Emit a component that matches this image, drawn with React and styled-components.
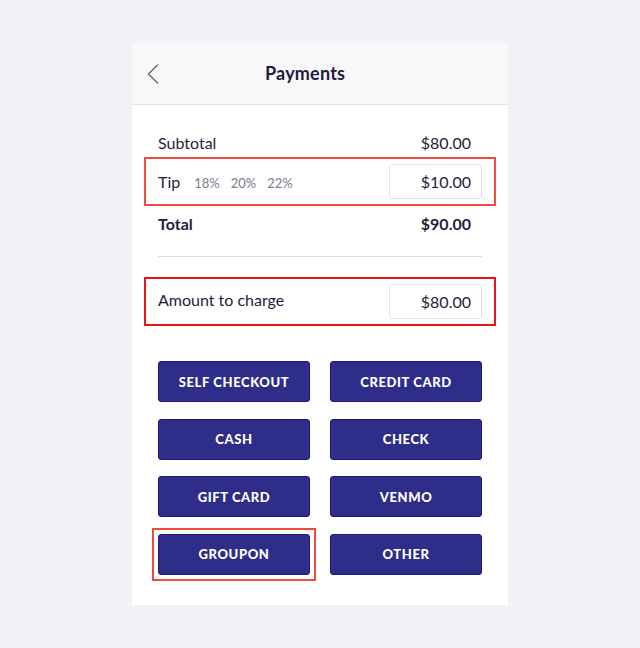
import React from "react";
import styled, { createGlobalStyle } from "styled-components";

const Global = createGlobalStyle`
  html, body { margin: 0; padding: 0; background: #f2f2f6; }
  body { font-family: Lato, "Noto Sans", sans-serif; color: #1e1e3c; }
  * { box-sizing: border-box; }
`;

const Page = styled.div`
  display: flex;
  justify-content: center;
  align-items: flex-start;
  padding-top: 43px;
  min-height: 648px;
`;

const Card = styled.div`
  width: 376px;
  background: #ffffff;
  display: flex;
  flex-direction: column;
`;

const Header = styled.div`
  height: 62px;
  background: #f8f8f8;
  border-bottom: 1px solid #e2e2e6;
  display: flex;
  align-items: center;
  padding-left: 15px;
`;

const BackButton = styled.button`
  border: none;
  background: none;
  padding: 0;
  width: 12px;
  height: 20px;
  display: flex;
  align-items: center;
  cursor: pointer;
`;

const Title = styled.h1`
  margin: 0 0 2px 106px;
  font-size: 18px;
  font-weight: 700;
  letter-spacing: 0.2px;
  color: #1e1e3c;
`;

const Body = styled.div`
  padding: 23px 26px 30px;
  display: flex;
  flex-direction: column;
`;

const Row = styled.div`
  display: flex;
  align-items: center;
  justify-content: space-between;
  height: ${(p) => p.$h || 29}px;
  font-size: 16px;
  font-weight: ${(p) => (p.$bold ? 700 : 400)};
`;

const Value = styled.span`
  padding-right: 11px;
`;

const Highlight = styled.div`
  margin: ${(p) => p.$mt || 0}px -14px 0;
  padding: 5px 12px;
  border: 2px solid ${(p) => p.$color || "#f04a3e"};
`;

const Label = styled.div`
  display: flex;
  align-items: baseline;
  gap: 12px;
  margin-bottom: ${(p) => p.$raise || 0}px;
`;

const Percents = styled.div`
  display: flex;
  gap: 11px;
  margin-left: 2px;
  font-size: 13px;
  color: #7c7c8c;
`;

const AmountBox = styled.div`
  width: 93px;
  height: 35px;
  border: 1px solid #e0e0e4;
  border-radius: 3px;
  display: flex;
  align-items: center;
  justify-content: flex-end;
  padding-right: 10px;
  font-size: 16px;
  color: #1e1e3c;
`;

const Divider = styled.hr`
  margin: 16px 0 0;
  border: none;
  border-top: 1px solid #dedee2;
`;

const Buttons = styled.div`
  margin-top: 35px;
  display: grid;
  grid-template-columns: 1fr 1fr;
  column-gap: 20px;
  row-gap: 16.5px;
`;

const PayButton = styled.button`
  position: relative;
  height: 41px;
  background: #2e2e8a;
  border: 1px solid #1c1c7e;
  border-radius: 3px;
  color: #ffffff;
  font-family: Lato, "Noto Sans", sans-serif;
  font-weight: 900;
  font-size: 13px;
  letter-spacing: 0.6px;
  cursor: pointer;

  &::after {
    content: "";
    display: ${(p) => (p.$highlight ? "block" : "none")};
    position: absolute;
    inset: -7px -7px -7px -7px;
    border: 2px solid #f04a3e;
    pointer-events: none;
  }
`;

const methods = [
  "SELF CHECKOUT",
  "CREDIT CARD",
  "CASH",
  "CHECK",
  "GIFT CARD",
  "VENMO",
  "GROUPON",
  "OTHER",
];

export default function App() {
  return (
    <>
      <Global />
      <Page>
        <Card>
          <Header>
            <BackButton aria-label="Back">
              <svg width="12" height="20" viewBox="0 0 12 20" fill="none">
                <path d="M10.5 1 L1.5 10 L10.5 19" stroke="#6e6e80" strokeWidth="1.6" strokeLinecap="round" strokeLinejoin="round" />
              </svg>
            </BackButton>
            <Title>Payments</Title>
          </Header>
          <Body>
            <Row>
              <span>Subtotal</span>
              <Value>$80.00</Value>
            </Row>
            <Highlight>
              <Row $h={35}>
                <Label>
                  <span>Tip</span>
                  <Percents>
                    <span>18%</span>
                    <span>20%</span>
                    <span>22%</span>
                  </Percents>
                </Label>
                <AmountBox>$10.00</AmountBox>
              </Row>
            </Highlight>
            <Row $h={34} $bold>
              <span>Total</span>
              <Value>$90.00</Value>
            </Row>
            <Divider />
            <Highlight $mt={20} $color="#e8141b">
              <Row $h={35}>
                <Label $raise={5}>Amount to charge</Label>
                <AmountBox>$80.00</AmountBox>
              </Row>
            </Highlight>
            <Buttons>
              {methods.map((m) => (
                <PayButton key={m} $highlight={m === "GROUPON"}>
                  {m}
                </PayButton>
              ))}
            </Buttons>
          </Body>
        </Card>
      </Page>
    </>
  );
}
